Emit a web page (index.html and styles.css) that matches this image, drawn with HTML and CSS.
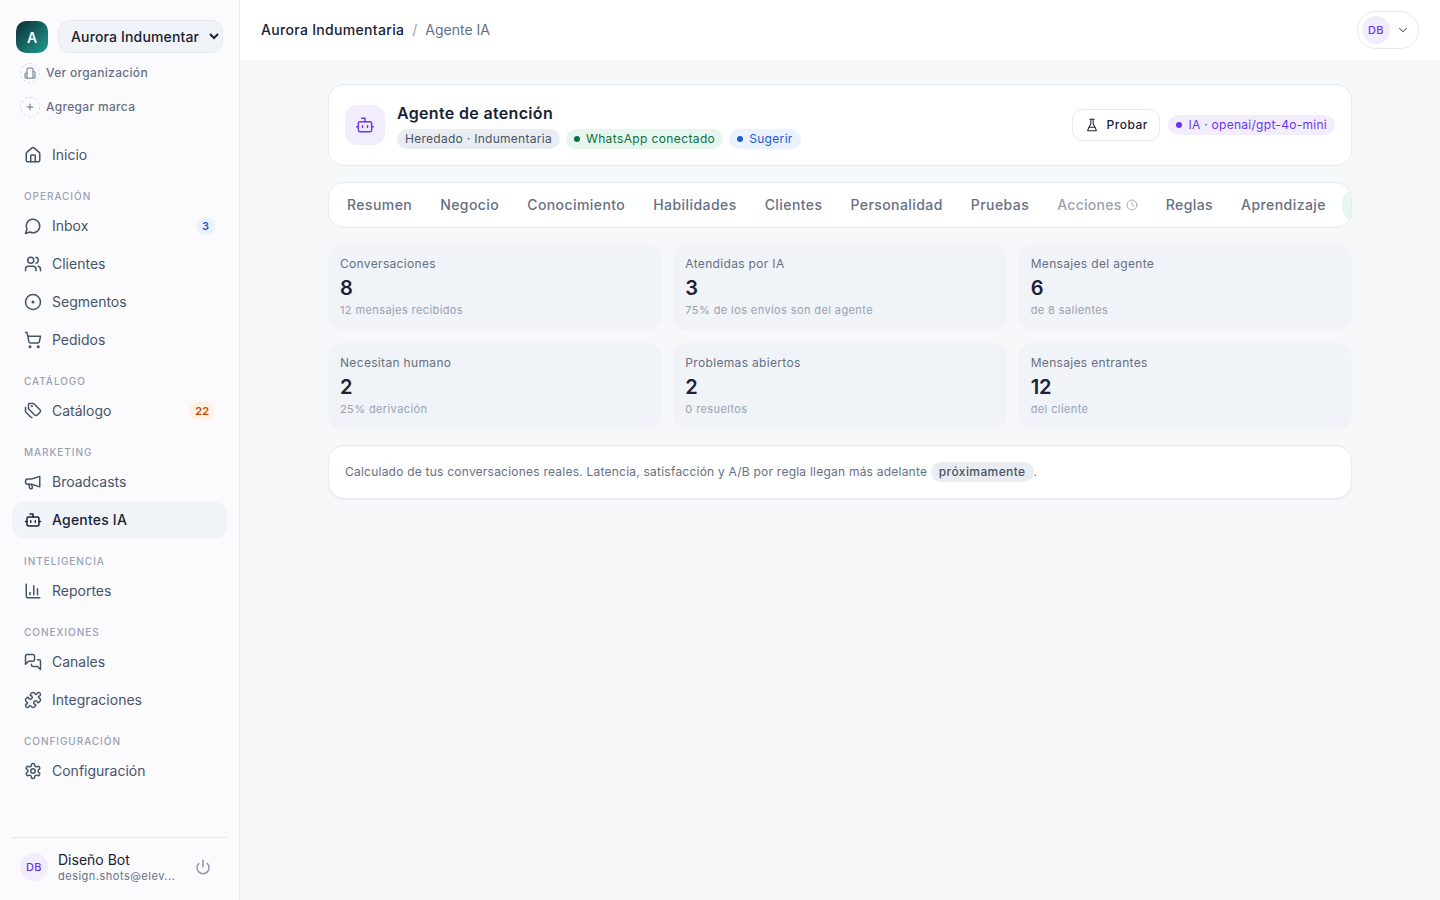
FILE: index.html
```html
<!DOCTYPE html>
<html lang="es">
<head>
<meta charset="utf-8">
<title>Agente IA</title>
<link rel="stylesheet" href="styles.css">
</head>
<body>
<div class="app">
  <aside class="sidebar">
    <div class="brand-row">
      <div class="brand-logo">A</div>
      <select class="brand-select"><option>Aurora Indumentaria</option></select>
    </div>
    <div class="brand-link"><span class="dash-icon"><svg viewBox="0 0 24 24" class="ic12-org"><path d="M6 22V4a2 2 0 0 1 2-2h8a2 2 0 0 1 2 2v18Z"/><path d="M6 12H4a2 2 0 0 0-2 2v6a2 2 0 0 0 2 2h2"/><path d="M18 9h2a2 2 0 0 1 2 2v9a2 2 0 0 1-2 2h-2"/></svg></span>Ver organización</div>
    <div class="brand-link"><span class="dash-icon"><svg viewBox="0 0 24 24" class="ic10"><path d="M5 12h14M12 5v14"/></svg></span>Agregar marca</div>

    <nav class="nav">
      <a class="item"><svg viewBox="0 0 24 24" class="ic"><path d="M15 21v-8a1 1 0 0 0-1-1h-4a1 1 0 0 0-1 1v8"/><path d="M3 10a2 2 0 0 1 .709-1.528l7-5.999a2 2 0 0 1 2.582 0l7 5.999A2 2 0 0 1 21 10v9a2 2 0 0 1-2 2H5a2 2 0 0 1-2-2z"/></svg>Inicio</a>
      <div class="label">OPERACIÓN</div>
      <a class="item"><svg viewBox="0 0 24 24" class="ic"><path d="M7.9 20A9 9 0 1 0 4 16.1L2 22Z"/></svg>Inbox<span class="count blue">3</span></a>
      <a class="item"><svg viewBox="0 0 24 24" class="ic"><path d="M16 21v-2a4 4 0 0 0-4-4H6a4 4 0 0 0-4 4v2"/><circle cx="9" cy="7" r="4"/><path d="M22 21v-2a4 4 0 0 0-3-3.87"/><path d="M16 3.13a4 4 0 0 1 0 7.75"/></svg>Clientes</a>
      <a class="item"><svg viewBox="0 0 24 24" class="ic"><circle cx="12" cy="12" r="10"/><circle cx="12" cy="12" r="1"/></svg>Segmentos</a>
      <a class="item"><svg viewBox="0 0 24 24" class="ic"><circle cx="8" cy="21" r="1"/><circle cx="19" cy="21" r="1"/><path d="M2.05 2.05h2l2.66 12.42a2 2 0 0 0 2 1.58h9.78a2 2 0 0 0 1.95-1.57l1.65-7.43H5.12"/></svg>Pedidos</a>
      <div class="label">CATÁLOGO</div>
      <a class="item"><svg viewBox="0 0 24 24" class="ic"><path d="M7 2h5.2a2 2 0 0 1 1.4.6l7.7 7.7a2.4 2.4 0 0 1 0 3.4l-3.6 3.6a2.4 2.4 0 0 1-3.4 0L6.6 9.6A2 2 0 0 1 6 8.2V3a1 1 0 0 1 1-1Z"/><circle cx="10.5" cy="5.5" r=".5"/><path d="M2 7v5.2a2 2 0 0 0 .6 1.4L9 20a2 2 0 0 0 1.5.6"/></svg>Catálogo<span class="count orange">22</span></a>
      <div class="label">MARKETING</div>
      <a class="item"><svg viewBox="0 0 24 24" class="ic"><path d="M21 4.5 10 8H5a3 3 0 0 0-3 3v1a3 3 0 0 0 3 3h5l11 3.5Z"/><path d="m6.5 15 1 5a2 2 0 0 0 3.8-.8L10 15.5"/></svg>Broadcasts</a>
      <a class="item active"><svg viewBox="0 0 24 24" class="ic"><path d="M12 8V4H8"/><rect width="16" height="12" x="4" y="8" rx="2"/><path d="M2 14h2"/><path d="M20 14h2"/><path d="M15 13v2"/><path d="M9 13v2"/></svg>Agentes IA</a>
      <div class="label">INTELIGENCIA</div>
      <a class="item"><svg viewBox="0 0 24 24" class="ic"><path d="M3 3v16a2 2 0 0 0 2 2h16"/><path d="M8 17v-3"/><path d="M13 17V5"/><path d="M18 17V9"/></svg>Reportes</a>
      <div class="label">CONEXIONES</div>
      <a class="item"><svg viewBox="0 0 24 24" class="ic"><path d="M14 9a2 2 0 0 1-2 2H6l-4 4V4a2 2 0 0 1 2-2h8a2 2 0 0 1 2 2z"/><path d="M18 9h2a2 2 0 0 1 2 2v11l-4-4h-6a2 2 0 0 1-2-2v-1"/></svg>Canales</a>
      <a class="item"><svg viewBox="0 0 24 24" class="ic"><path d="M15.39 4.39a1 1 0 0 0 1.68-.474 2.5 2.5 0 1 1 3.014 3.015 1 1 0 0 0-.474 1.68l1.683 1.682a2.414 2.414 0 0 1 0 3.414L19.61 15.39a1 1 0 0 1-1.68-.474 2.5 2.5 0 1 0-3.014 3.015 1 1 0 0 1 .474 1.68l-1.683 1.682a2.414 2.414 0 0 1-3.414 0L8.61 19.61a1 1 0 0 0-1.68.474 2.5 2.5 0 1 1-3.014-3.015 1 1 0 0 0 .474-1.68l-1.683-1.682a2.414 2.414 0 0 1 0-3.414L4.39 8.61a1 1 0 0 1 1.68.474 2.5 2.5 0 1 0 3.014-3.015 1 1 0 0 1-.474-1.68l1.683-1.682a2.414 2.414 0 0 1 3.414 0z"/></svg>Integraciones</a>
      <div class="label">CONFIGURACIÓN</div>
      <a class="item"><svg viewBox="0 0 24 24" class="ic"><path d="M12.22 2h-.44a2 2 0 0 0-2 2v.18a2 2 0 0 1-1 1.73l-.43.25a2 2 0 0 1-2 0l-.15-.08a2 2 0 0 0-2.73.73l-.22.38a2 2 0 0 0 .73 2.73l.15.1a2 2 0 0 1 1 1.72v.51a2 2 0 0 1-1 1.74l-.15.09a2 2 0 0 0-.73 2.73l.22.38a2 2 0 0 0 2.73.73l.15-.08a2 2 0 0 1 2 0l.43.25a2 2 0 0 1 1 1.73V20a2 2 0 0 0 2 2h.44a2 2 0 0 0 2-2v-.18a2 2 0 0 1 1-1.73l.43-.25a2 2 0 0 1 2 0l.15.08a2 2 0 0 0 2.73-.73l.22-.39a2 2 0 0 0-.73-2.73l-.15-.08a2 2 0 0 1-1-1.74v-.5a2 2 0 0 1 1-1.74l.15-.09a2 2 0 0 0 .73-2.73l-.22-.38a2 2 0 0 0-2.73-.73l-.15.08a2 2 0 0 1-2 0l-.43-.25a2 2 0 0 1-1-1.73V4a2 2 0 0 0-2-2z"/><circle cx="12" cy="12" r="3"/></svg>Configuración</a>
    </nav>

    <div class="user">
      <div class="avatar">DB</div>
      <div class="user-info">
        <div class="user-name">Diseño Bot</div>
        <div class="user-mail">design.shots@elev...</div>
      </div>
      <svg viewBox="0 0 24 24" class="ic power"><path d="M12 2v10"/><path d="M18.4 6.6a9 9 0 1 1-12.77.04"/></svg>
    </div>
  </aside>

  <div class="main">
    <header class="topbar">
      <div class="crumbs"><span class="crumb-main">Aurora Indumentaria</span><span class="crumb-sep">/</span><span class="crumb-sub">Agente IA</span></div>
      <div class="user-pill">
        <div class="avatar">DB</div>
        <svg viewBox="0 0 24 24" class="chev"><path d="m6 9 6 6 6-6"/></svg>
      </div>
    </header>

    <main class="content">
      <section class="card agent">
        <div class="agent-icon"><svg viewBox="0 0 24 24" class="ic20"><path d="M12 8V4H8"/><rect width="16" height="12" x="4" y="8" rx="2"/><path d="M2 14h2"/><path d="M20 14h2"/><path d="M15 13v2"/><path d="M9 13v2"/></svg></div>
        <div class="agent-text">
          <h1>Agente de atención</h1>
          <div class="pills">
            <span class="pill grey">Heredado · Indumentaria</span>
            <span class="pill green"><i class="dot"></i>WhatsApp conectado</span>
            <span class="pill blue"><i class="dot"></i>Sugerir</span>
          </div>
        </div>
        <div class="agent-actions">
          <button class="btn"><svg viewBox="0 0 24 24" class="ic14"><path d="M10 2v7.527a2 2 0 0 1-.211.896L4.72 20.55a1 1 0 0 0 .9 1.45h12.76a1 1 0 0 0 .9-1.45l-5.069-10.127A2 2 0 0 1 14 9.527V2"/><path d="M8.5 2h7"/><path d="M7 16h10"/></svg>Probar</button>
          <span class="pill violet"><i class="dot"></i>IA · openai/gpt-4o-mini</span>
        </div>
      </section>

      <nav class="card tabs">
        <span class="tab">Resumen</span>
        <span class="tab">Negocio</span>
        <span class="tab">Conocimiento</span>
        <span class="tab">Habilidades</span>
        <span class="tab">Clientes</span>
        <span class="tab">Personalidad</span>
        <span class="tab">Pruebas</span>
        <span class="tab off">Acciones <svg viewBox="0 0 24 24" class="ic12"><circle cx="12" cy="12" r="10"/><path d="M12 6v6l4 2"/></svg></span>
        <span class="tab">Reglas</span>
        <span class="tab">Aprendizaje</span>
        <span class="tab current"></span>
      </nav>

      <section class="stats">
        <div class="stat"><div class="stat-label">Conversaciones</div><div class="stat-value">8</div><div class="stat-note">12 mensajes recibidos</div></div>
        <div class="stat"><div class="stat-label">Atendidas por IA</div><div class="stat-value">3</div><div class="stat-note">75% de los envíos son del agente</div></div>
        <div class="stat"><div class="stat-label">Mensajes del agente</div><div class="stat-value">6</div><div class="stat-note">de 8 salientes</div></div>
        <div class="stat"><div class="stat-label">Necesitan humano</div><div class="stat-value">2</div><div class="stat-note">25% derivación</div></div>
        <div class="stat"><div class="stat-label">Problemas abiertos</div><div class="stat-value">2</div><div class="stat-note">0 resueltos</div></div>
        <div class="stat"><div class="stat-label">Mensajes entrantes</div><div class="stat-value">12</div><div class="stat-note">del cliente</div></div>
      </section>

      <section class="card note">Calculado de tus conversaciones reales. Latencia, satisfacción y A/B por regla llegan más adelante <span class="soon">próximamente</span>.</section>
    </main>
  </div>
</div>
</body>
</html>
```

FILE: styles.css
```css
* { box-sizing: border-box; }
html, body { margin: 0; height: 100%; }
body { font-family: Inter, "Noto Sans", sans-serif; background: #f7f8fa; color: #1a2233; overflow: hidden; }
svg { fill: none; stroke: currentColor; stroke-width: 2; stroke-linecap: round; stroke-linejoin: round; flex: none; }

.app { display: flex; height: 900px; }

.sidebar { width: 240px; flex: none; background: #fbfbfe; border-right: 1px solid #e6e9ef; padding: 20px 12px 0; display: flex; flex-direction: column; height: 900px; }
.brand-row { display: flex; align-items: center; gap: 10px; padding: 0 4px; height: 33px; }
.brand-logo { width: 32px; height: 32px; flex: none; margin-top: 1px; border-radius: 10px; background: linear-gradient(135deg, #0c2c33, #1f9e92); color: #fff; font-size: 14px; font-weight: 600; display: flex; align-items: center; justify-content: center; }
.brand-select { width: 165px; height: 33px; flex: none; border: 1px solid #e6e9ef; border-radius: 12px; background: #f0f3f7; color: #1a2233; font: 500 14px Inter, sans-serif; letter-spacing: .15px; padding: 0 6px 0 8px; }
.brand-link { display: flex; align-items: center; gap: 6px; height: 34px; padding-left: 8px; font-size: 12px; line-height: 16px; font-weight: 500; color: #667085; letter-spacing: .32px; }
.brand-row + .brand-link { margin-top: 3px; }
.dash-icon { width: 20px; height: 20px; border: 1px dashed #d5d9e2; border-radius: 50%; display: flex; align-items: center; justify-content: center; color: #475467; }
.ic10 { width: 10px; height: 10px; }
.ic12-org { width: 12px; height: 12px; color: #8490a3; stroke-width: 2.5; }

.nav { display: flex; flex-direction: column; gap: 2px; margin-top: 13px; }
.item { display: flex; align-items: center; gap: 10px; height: 36px; padding: 0 12px; border-radius: 12px; font-size: 14px; line-height: 20px; color: #475467; }
.item.active { background: #f0f3f7; color: #1a2233; font-weight: 500; letter-spacing: .2px; }
.ic { width: 18px; height: 18px; flex: none; stroke-width: 2; }
.count { margin-left: auto; height: 18px; min-width: 19px; padding: 0 6px; border-radius: 9px; font-size: 11px; line-height: 14px; font-weight: 600; display: flex; align-items: center; justify-content: center; }
.count.blue { background: #ebf1fd; color: #1d5ad6; }
.count.orange { background: #fdf1e3; color: #c2480c; }
.label { height: 14px; line-height: 14px; margin: 14px 0 3px; padding-left: 12px; font-size: 10px; font-weight: 500; letter-spacing: .95px; color: #98a2b3; }

.user { margin-top: auto; border-top: 1px solid #e6e9ef; height: 63px; display: flex; align-items: center; padding: 0 8px 4px; gap: 10px; }
.avatar { width: 28px; height: 28px; flex: none; border-radius: 50%; background: #f1ecfe; color: #6b35f0; font-size: 11px; line-height: 14px; font-weight: 500; letter-spacing: .3px; display: flex; align-items: center; justify-content: center; }
.user-info { flex: 1; min-width: 0; }
.user-name { font-size: 14px; line-height: 18px; color: #1a2233; }
.user-mail { font-size: 11px; line-height: 14px; letter-spacing: .5px; color: #667085; white-space: nowrap; }
.power { width: 16px; height: 16px; color: #8e98a8; margin: 0 8px; stroke-width: 2.25; }

.main { flex: 1; min-width: 0; display: flex; flex-direction: column; }
.topbar { height: 60px; background: #fff; display: flex; align-items: center; justify-content: space-between; padding: 0 21px; }
.crumbs { display: flex; align-items: center; gap: 8px; font-size: 14px; line-height: 20px; }
.crumb-main { font-weight: 500; color: #1a2233; letter-spacing: .32px; }
.crumb-sep { color: #98a2b3; }
.crumb-sub { color: #667085; }
.user-pill { width: 62px; height: 38px; border: 1px solid #e6e9ef; border-radius: 19px; display: flex; align-items: center; padding: 0 4px; gap: 6px; }
.chev { width: 14px; height: 14px; color: #475467; stroke-width: 1.75; }

.content { width: 1024px; margin: 24px auto 0; display: flex; flex-direction: column; gap: 16px; }
.card { background: #fff; border: 1px solid #e6e9ef; border-radius: 16px; }

.agent { height: 82px; display: flex; align-items: center; padding: 0 16px; gap: 12px; }
.agent-icon { width: 40px; height: 40px; border-radius: 12px; background: #f1ecfe; color: #6b35f0; display: flex; align-items: center; justify-content: center; }
.ic20 { width: 20px; height: 20px; stroke-width: 1.75; }
.agent-text { flex: 1; display: flex; flex-direction: column; gap: 4px; }
h1 { margin: 0; font-size: 16px; line-height: 24px; font-weight: 600; color: #1a2233; letter-spacing: .33px; }
.pills { display: flex; gap: 6px; }
.pill { height: 20px; padding: 0 8px; border-radius: 10px; font-size: 12px; line-height: 16px; letter-spacing: .32px; display: inline-flex; align-items: center; gap: 6px; white-space: nowrap; }
.dot { width: 6px; height: 6px; border-radius: 50%; background: currentColor; }
.pill.grey { background: #e9edf2; color: #475467; letter-spacing: .28px; }
.pill.green { background: #e6f6ee; color: #0a7040; letter-spacing: .38px; }
.pill.blue { background: #ebf1fd; color: #1d5ad6; }
.pill.violet { background: #f1ecfe; color: #6b35f0; letter-spacing: .28px; }
.agent-actions { display: flex; align-items: center; gap: 8px; }
.btn { height: 32px; padding: 0 11.5px 0 12px; border: 1px solid #e6e9ef; border-radius: 10px; background: #fff; color: #1a2233; font: 500 12px/16px Inter, sans-serif; letter-spacing: .5px; display: inline-flex; align-items: center; gap: 8px; }
.ic14 { width: 14px; height: 14px; stroke-width: 1.75; }

.tabs { height: 46px; display: flex; align-items: center; padding: 0 4px; overflow: hidden; flex: none; }
.tab { flex: none; height: 30px; padding: 0 14px; border-radius: 12px; display: inline-flex; align-items: center; gap: 4px; font-size: 14px; line-height: 20px; font-weight: 500; letter-spacing: .43px; color: #667085; white-space: nowrap; }
.tab.off { color: #98a2b3; letter-spacing: .3px; }
.tab.current { width: 60px; margin-left: 2px; background: #e6f6f0; }
.ic12 { width: 12px; height: 12px; stroke-width: 1.75; }

.stats { display: grid; grid-template-columns: repeat(3, 1fr); gap: 12px; }
.stat { height: 86.5px; padding: 12px 12px 0; background: #f0f3f7; border-radius: 14px; }
.stat-label { font-size: 12px; line-height: 16px; letter-spacing: .33px; color: #667085; }
.stat-value { font-size: 20px; line-height: 28px; font-weight: 600; color: #1a2233; margin-top: 2px; }
.stat-note { font-size: 11px; line-height: 16px; letter-spacing: .4px; color: #98a2b3; }

.note { height: 54px; display: flex; align-items: center; padding: 0 16px; font-size: 12px; line-height: 16px; letter-spacing: .227px; color: #667085; box-shadow: 0 1px 2px rgba(16,24,40,.05); white-space: pre-wrap; }
.soon { height: 20px; padding: 0 8px; border-radius: 10px; background: #e9edf2; color: #475467; font-weight: 500; letter-spacing: .4px; display: inline-flex; align-items: center; }
```
